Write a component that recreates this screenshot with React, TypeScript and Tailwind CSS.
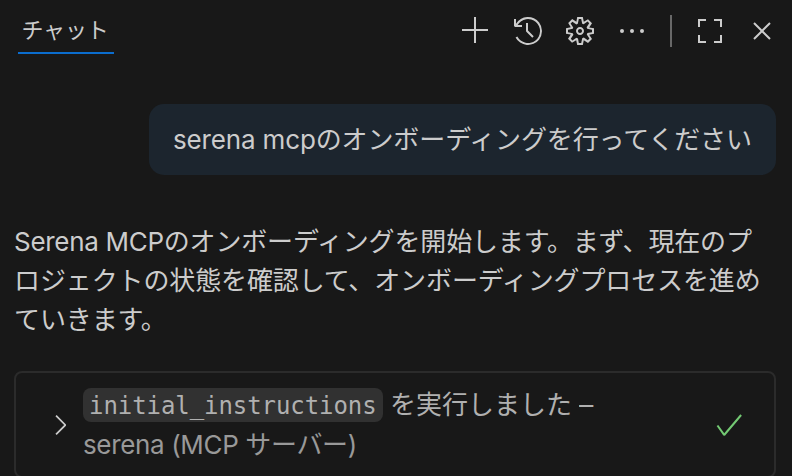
import {
  VscAdd,
  VscCheck,
  VscChevronRight,
  VscClose,
  VscEllipsis,
  VscGear,
  VscHistory,
} from 'react-icons/vsc';

function MaximizeIcon({ className }: { className?: string }) {
  return (
    <svg className={className} viewBox="0 0 32 32" fill="none" stroke="currentColor" strokeWidth="2">
      <path d="M12 5H5v7M20 5h7v7M5 20v7h7M27 20v7h-7" />
    </svg>
  );
}

export default function App() {
  return (
    <div className="flex h-[476px] w-[792px] flex-col overflow-hidden bg-[#181818] font-[Inter,'Noto_Sans_CJK_JP',sans-serif] text-[26px] text-[#cccccc]">
      <header className="flex h-[62px] shrink-0 items-center justify-between pr-[14px] pl-[18px]">
        <div className="flex h-[46px] w-24 items-center justify-center border-b-2 border-[#0b6dce] text-[22px] leading-none whitespace-nowrap">
          <span className="mr-0.5 tracking-[-0.2px]">チャット</span>
        </div>
        <div className="flex items-center text-[32px]">
          <VscAdd />
          <VscHistory className="ml-5" />
          <VscGear className="ml-5" />
          <VscEllipsis className="ml-5" />
          <span className="ml-[22px] h-8 w-0.5 bg-[#686868]" />
          <MaximizeIcon className="ml-[22px] size-8" />
          <VscClose className="ml-5" />
        </div>
      </header>

      <main className="flex flex-col pr-4 pl-[14px]">
        <div className="mt-[42px] flex h-[71px] items-center self-end rounded-[15px] bg-[#1c252e] px-6 whitespace-nowrap">
          <p className="w-[579px] leading-[38px]">
            <span className="tracking-[-0.15px]">serena mcp</span>
            <span className="tracking-[-0.12px]">のオンボーディングを行ってください</span>
          </p>
        </div>

        <div className="mt-[47px] leading-[39px] whitespace-nowrap">
          <p>
            <span className="tracking-[-0.3px]">Serena MCP</span>
            <span className="tracking-[-0.16px]">のオンボーディングを開始します。まず、現在のプ</span>
          </p>
          <p className="tracking-[-0.12px]">ロジェクトの状態を確認して、オンボーディングプロセスを進め</p>
          <p className="tracking-[-0.12px]">ていきます。</p>
        </div>

        <section className="mt-8 flex h-[107px] items-center rounded-lg border-2 border-[#2b2b2b] pr-[29px] pl-7 text-[#999999]">
          <VscChevronRight className="size-8 shrink-0 text-[#cccccc]" />
          <div className="ml-[7px] flex-1 whitespace-nowrap">
            <div className="flex h-[39px] items-center">
              <code className="flex h-[34px] w-[300px] items-center rounded-lg bg-[#313131] pt-px pl-[6px] font-['DejaVu_Sans_Mono',monospace] text-[24px] leading-none tracking-[-0.07px] text-[#b0b0b0]">
                initial_instructions
              </code>
              <span className="-mt-0.5 ml-[7px] text-[#b0b0b0]">
                を実行しました <span className="inline-block origin-left scale-x-110">–</span>
              </span>
            </div>
            <p className="leading-[39px] tracking-[-0.35px]">serena (MCP サーバー)</p>
          </div>
          <VscCheck className="size-8 shrink-0 text-[#73c973]" />
        </section>
      </main>
    </div>
  );
}
